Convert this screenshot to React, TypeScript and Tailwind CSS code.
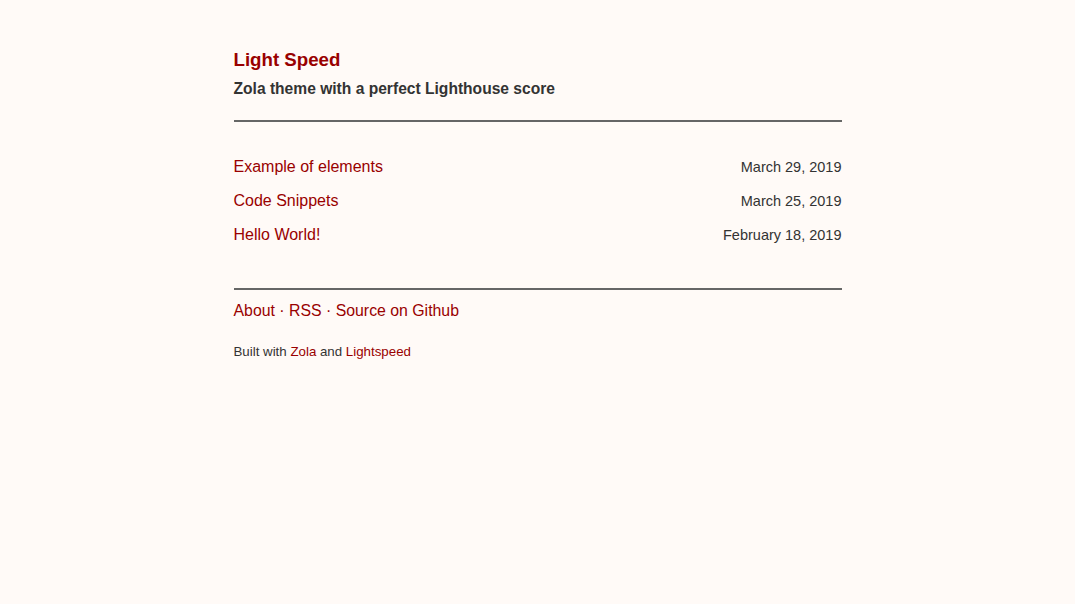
const POSTS = [
  { title: "Example of elements", date: "March 29, 2019" },
  { title: "Code Snippets", date: "March 25, 2019" },
  { title: "Hello World!", date: "February 18, 2019" },
];

export default function App() {
  return (
    <div className="min-h-[604px] bg-[#fffaf7] font-['Liberation_Sans',Arial,sans-serif] text-[#333]">
      <div className="mx-auto w-[608px] pt-[49px]">
        <header>
          <a href="#" className="block text-[18.7px] font-bold leading-[22px] text-[#900]">Light Speed</a>
          <p className="mt-[8px] text-[15.6px] font-bold leading-[20px]">Zola theme with a perfect Lighthouse score</p>
        </header>
        <hr className="mt-[21px] h-[2px] border-0 bg-[#666]" />

        <ul className="mt-[28px]">
          {POSTS.map((p) => (
            <li key={p.title} className="flex h-[34px] items-center justify-between">
              <a href="#" className="text-[16px] leading-[20px] text-[#900]">{p.title}</a>
              <span className="text-[14.5px] leading-[20px]">{p.date}</span>
            </li>
          ))}
        </ul>

        <hr className="mt-[36px] h-[2px] border-0 bg-[#666]" />
        <footer>
          <p className="mt-[11px] text-[15.85px] leading-[20px] text-[#900]">
            <a href="#">About</a> · <a href="#">RSS</a> · <a href="#">Source on Github</a>
          </p>
          <p className="mt-[23px] text-[13.3px] leading-[16px]">
            Built with <a href="#" className="text-[#900]">Zola</a> and <a href="#" className="text-[#900]">Lightspeed</a>
          </p>
        </footer>
      </div>
    </div>
  );
}
